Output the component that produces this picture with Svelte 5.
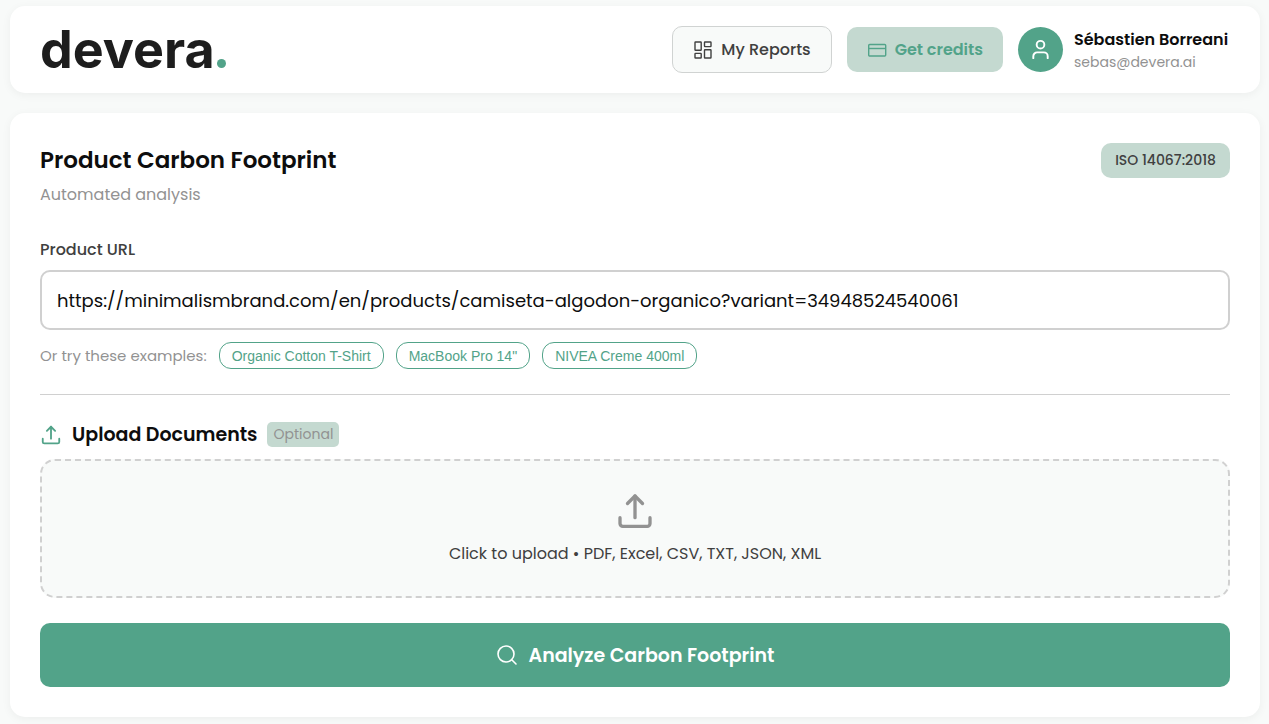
<script>
  let url = $state('https://minimalismbrand.com/en/products/camiseta-algodon-organico?variant=34948524540061');

  const examples = [
    { name: 'Organic Cotton T-Shirt', url: 'https://minimalismbrand.com/en/products/camiseta-algodon-organico?variant=34948524540061' },
    { name: 'MacBook Pro 14"', url: 'https://www.apple.com/macbook-pro/' },
    { name: 'NIVEA Creme 400ml', url: 'https://www.nivea.co.uk/products/nivea-creme' }
  ];

  const handleSubmit = (event) => {
    event.preventDefault();
  };
</script>

{#snippet uploadIcon(size)}
  <svg width={size} height={size} viewBox="0 0 24 24" fill="none" stroke="currentColor" stroke-width="2" stroke-linecap="round" stroke-linejoin="round" aria-hidden="true">
    <path d="M3 16v3.5a1.7 1.7 0 0 0 1.7 1.7h14.6a1.7 1.7 0 0 0 1.7-1.7v-3.5" />
    <path d="M7.5 7.5l4.5-4.5 4.5 4.5" />
    <path d="M12 3v13" />
  </svg>
{/snippet}

<div class="page">
  <header class="panel topbar">
    <a class="logo" href="/" aria-label="devera">devera<span class="dot"></span></a>

    <div class="actions">
      <button class="btn reports" type="button">
        <svg width="20" height="20" viewBox="0 0 20 20" fill="none" stroke="currentColor" stroke-width="1.4" stroke-linejoin="round" aria-hidden="true">
          <rect x="2" y="2" width="6.2" height="8.3" rx=".5" />
          <rect x="11.5" y="2" width="6.5" height="4.6" rx=".5" />
          <rect x="2" y="13.4" width="6.2" height="4.6" rx=".5" />
          <rect x="11.5" y="9.7" width="6.5" height="8.3" rx=".5" />
        </svg>
        My Reports
      </button>
      <button class="btn credits" type="button">
        <svg width="20" height="20" viewBox="0 0 20 20" fill="none" stroke="currentColor" stroke-width="1.4" aria-hidden="true">
          <rect x="1.7" y="4.5" width="17" height="11.5" rx="1" />
          <path d="M1.7 8.5h17" />
        </svg>
        Get credits
      </button>
      <div class="user">
        <div class="avatar">
          <svg width="23" height="23" viewBox="0 0 24 24" fill="none" stroke="currentColor" stroke-width="2" stroke-linecap="round" aria-hidden="true">
            <circle cx="12" cy="7" r="4" />
            <path d="M4.5 21v-2a4 4 0 0 1 4-4h7a4 4 0 0 1 4 4v2" />
          </svg>
        </div>
        <div class="details">
          <div class="name">Sébastien Borreani</div>
          <div class="email">sebas@devera.ai</div>
        </div>
      </div>
    </div>
  </header>

  <main class="panel">
    <form onsubmit={handleSubmit}>
      <div class="heading">
        <div>
          <h1>Product Carbon Footprint</h1>
          <p class="subtitle">Automated analysis</p>
        </div>
        <span class="iso">ISO 14067:2018</span>
      </div>

      <label class="url-label" for="url">Product URL</label>
      <input class="url" id="url" type="text" bind:value={url} />

      <div class="examples">
        <span class="hint">Or try these examples:</span>
        {#each examples as example}
          <button class="chip" type="button" onclick={() => (url = example.url)}>{example.name}</button>
        {/each}
      </div>

      <div class="upload-title">
        {@render uploadIcon(22)}
        <h2>Upload Documents</h2>
        <span class="optional">Optional</span>
      </div>
      <label class="dropzone">
        <input type="file" multiple accept=".pdf,.xls,.xlsx,.csv,.txt,.json,.xml" />
        {@render uploadIcon(40)}
        <span>Click to upload • PDF, Excel, CSV, TXT, JSON, XML</span>
      </label>

      <button class="analyze" type="submit">
        <svg width="22" height="22" viewBox="0 0 22 22" fill="none" stroke="currentColor" stroke-width="1.6" stroke-linecap="round" aria-hidden="true">
          <circle cx="10" cy="10" r="8" />
          <path d="M16 16l4 4" />
        </svg>
        Analyze Carbon Footprint
      </button>
    </form>
  </main>
</div>

<style>
  :global(body) {
    margin: 0;
    background: #f8faf9;
  }

  .page, .page * {
    box-sizing: border-box;
  }

  .page {
    display: flex;
    flex-direction: column;
    gap: 20px;
    padding: 6px 9px 7px 10px;
    font-family: Poppins, Inter, sans-serif;
    color: #0d0d0d;
  }

  .panel {
    padding: 30px;
    background: #fff;
    border-radius: 15px;
    box-shadow: 0 2px 10px rgba(0, 0, 0, 0.05);
  }

  .topbar {
    display: flex;
    align-items: center;
    justify-content: space-between;
    padding: 20px 30px;
  }

  .logo {
    display: flex;
    align-items: baseline;
    gap: 2px;
    font-family: Inter, sans-serif;
    font-size: 52px;
    font-weight: 700;
    line-height: 47px;
    color: #1d1d1d;
    text-decoration: none;
  }

  .dot {
    width: 9px;
    height: 9px;
    border-radius: 50%;
    background: #52a389;
  }

  .actions {
    display: flex;
    align-items: center;
    gap: 15px;
  }

  button {
    font-family: inherit;
    cursor: pointer;
  }

  .btn {
    display: flex;
    align-items: center;
    gap: 8px;
    height: 45px;
    padding: 0 20px;
    border: none;
    border-radius: 10px;
    font-size: 16px;
    font-weight: 500;
  }

  .reports {
    height: 47px;
    border: 1px solid #d0d3d2;
    background: #f8faf9;
    color: #404040;
  }

  .credits {
    background: #c4d9d0;
    color: #52a389;
    font-weight: 600;
  }

  .user {
    display: flex;
    align-items: center;
    gap: 11px;
  }

  .avatar {
    display: flex;
    align-items: center;
    justify-content: center;
    width: 45px;
    height: 45px;
    border-radius: 50%;
    background: #52a389;
    color: #fff;
  }

  .details {
    min-width: 156px;
  }

  .name {
    font-size: 16px;
    font-weight: 600;
    line-height: 24px;
  }

  .email {
    font-size: 14px;
    line-height: 20px;
    color: #929292;
  }

  .heading {
    display: flex;
    align-items: flex-start;
    justify-content: space-between;
  }

  h1 {
    margin: 0;
    font-size: 23px;
    font-weight: 600;
    line-height: 35px;
  }

  .subtitle {
    margin: 4px 0 0;
    font-size: 16px;
    line-height: 25px;
    color: #929292;
  }

  .iso {
    padding: 0 14px;
    border-radius: 10px;
    background: #c4d9d0;
    font-size: 14px;
    font-weight: 500;
    line-height: 35px;
    color: #404040;
  }

  .url-label {
    display: block;
    margin: 30px 0 8px;
    font-size: 16px;
    font-weight: 500;
    line-height: 25px;
    color: #404040;
  }

  .url {
    display: block;
    width: 100%;
    height: 60px;
    padding: 0 15px;
    border: 2px solid #d0d0d0;
    border-radius: 10px;
    background: #fff;
    font-family: inherit;
    font-size: 18px;
    color: #0d0d0d;
  }

  .examples {
    display: flex;
    flex-wrap: wrap;
    align-items: center;
    gap: 12px;
    padding: 12px 0 25px;
    border-bottom: 1px solid #d0d0d0;
  }

  .hint {
    font-size: 15px;
    line-height: 27px;
    color: #929292;
  }

  .chip {
    height: 27px;
    padding: 0 12px;
    border: 1px solid #52a389;
    border-radius: 12px;
    background: #fff;
    font-family: "Liberation Sans", Arial, sans-serif;
    font-size: 14px;
    color: #52a389;
  }

  .upload-title {
    display: flex;
    align-items: center;
    gap: 10px;
    margin: 27px 0 12px;
    color: #52a389;
  }

  h2 {
    margin: 0;
    font-size: 19px;
    font-weight: 600;
    line-height: 25px;
    color: #0d0d0d;
  }

  .optional {
    padding: 0 6px;
    border-radius: 5px;
    background: #c4d9d0;
    font-size: 14px;
    line-height: 25px;
    color: #929292;
  }

  .dropzone {
    display: flex;
    flex-direction: column;
    align-items: center;
    gap: 11px;
    padding: 30px 20px 31px;
    border: 2px dashed #d0d0d0;
    border-radius: 15px;
    background: #f8faf9;
    font-size: 16px;
    line-height: 23px;
    color: #929292;
    cursor: pointer;
  }

  .dropzone input {
    display: none;
  }

  .dropzone span {
    color: #404040;
  }

  .analyze {
    display: flex;
    align-items: center;
    justify-content: center;
    gap: 11px;
    width: 100%;
    height: 64px;
    margin-top: 25px;
    border: none;
    border-radius: 10px;
    background: #52a389;
    font-size: 19px;
    font-weight: 600;
    color: #fff;
  }
</style>
